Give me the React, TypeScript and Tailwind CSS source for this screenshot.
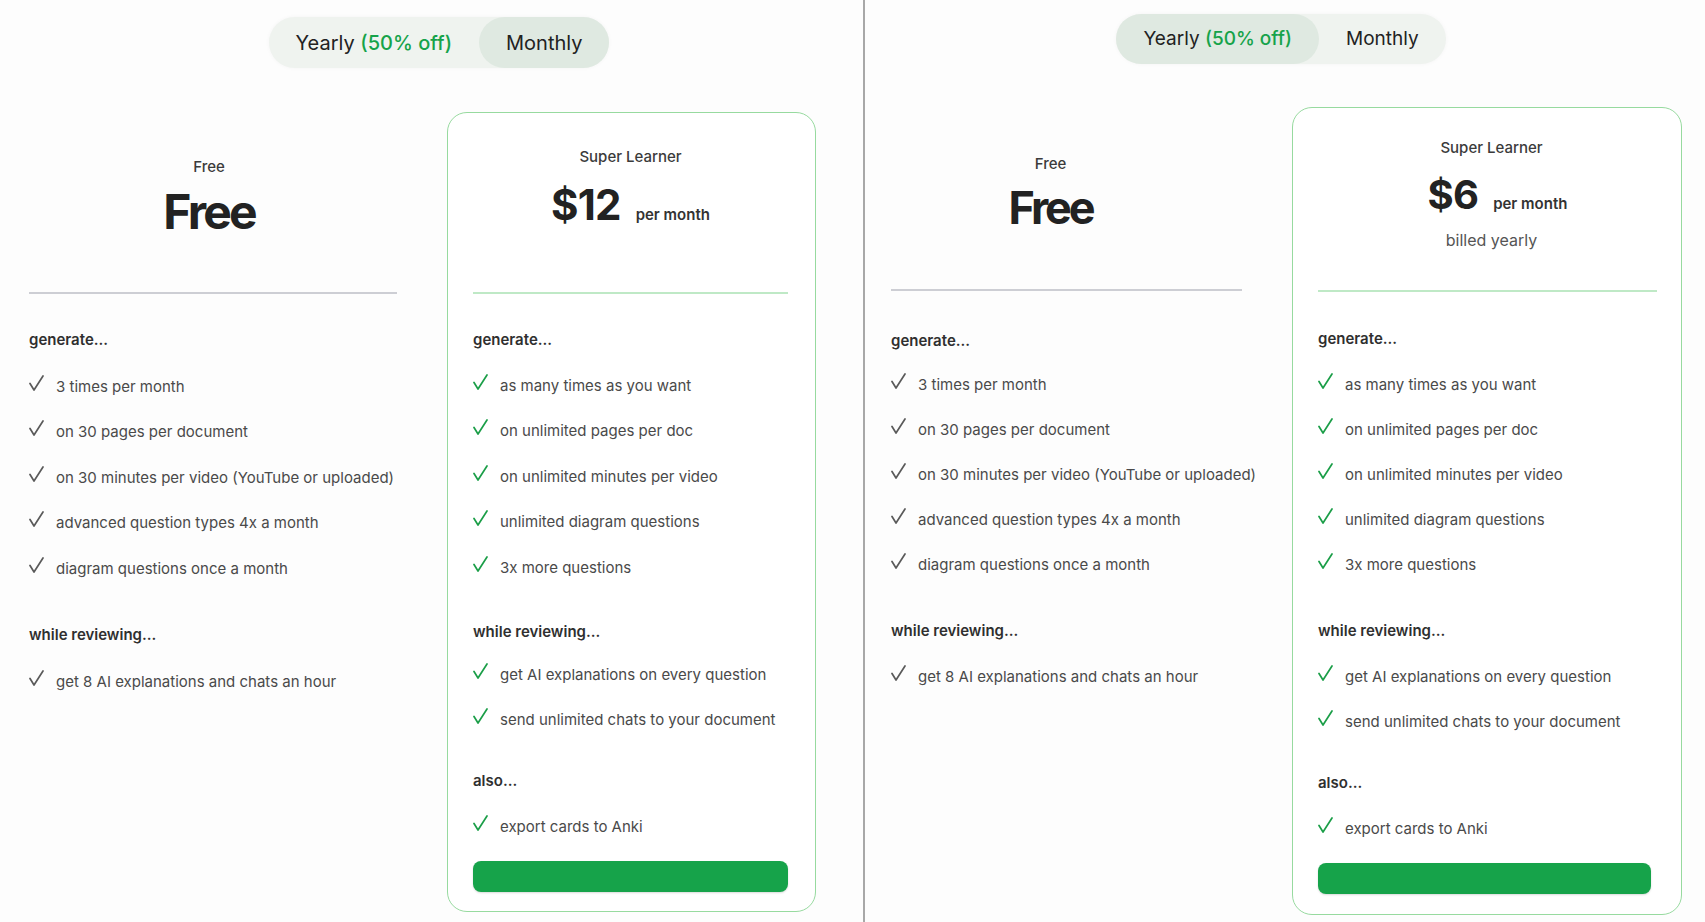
import type { ReactNode } from 'react';

const FREE_GENERATE = [
  '3 times per month',
  'on 30 pages per document',
  'on 30 minutes per video (YouTube or uploaded)',
  'advanced question types 4x a month',
  'diagram questions once a month',
];
const FREE_REVIEW = ['get 8 AI explanations and chats an hour'];
const PRO_GENERATE = [
  'as many times as you want',
  'on unlimited pages per doc',
  'on unlimited minutes per video',
  'unlimited diagram questions',
  '3x more questions',
];
const PRO_REVIEW = ['get AI explanations on every question', 'send unlimited chats to your document'];
const PRO_ALSO = ['export cards to Anki'];

type Layout = {
  panel: string;
  toggleRow: string;
  toggleH: string;
  toggleText: string;
  cards: string;
  freeCol: string;
  freeHead: string;
  freeBig: string;
  freeList: string;
  freeGap: string;
  freeFirst: string;
  freeReviewFirst: string;
  proCard: string;
  proHead: string;
  priceRow: string;
  price: string;
  proList: string;
  proGap: string;
  proReviewFirst: string;
  alsoShift: string;
  proBottom: string;
  rowGap: string;
};

const LEFT: Layout = {
  panel: 'w-[863px]',
  toggleRow: 'pt-[17px] pl-[15px]',
  toggleH: 'h-[51px]',
  toggleText: 'text-[20px]',
  cards: 'mt-[44px] pl-[29px] gap-[50px]',
  freeCol: 'w-[368px]',
  freeHead: 'h-[180px] pt-[45px] pr-[8px]',
  freeBig: 'text-[48px] mt-[11px] tracking-[-0.06em]',
  freeList: 'pt-[36px]',
  freeGap: 'gap-[46px]',
  freeFirst: 'mt-[27px]',
  freeReviewFirst: 'mt-[27px]',
  proCard: 'w-[369px] pl-[25px] pr-[27px]',
  proHead: 'h-[179px] pt-[34px]',
  priceRow: '',
  price: 'text-[42px]',
  proList: 'pt-[36px]',
  proGap: 'gap-[44px]',
  proReviewFirst: 'mt-[23px]',
  alsoShift: '-mt-[3px]',
  proBottom: 'mt-[24px] mb-[19px]',
  rowGap: 'gap-[25.5px]',
};

const RIGHT: Layout = {
  panel: 'flex-1',
  toggleRow: 'pt-[14px] pr-[8px]',
  toggleH: 'h-[50px]',
  toggleText: 'text-[19px]',
  cards: 'mt-[43px] pl-[26px] gap-[50px]',
  freeCol: 'w-[351px]',
  freeHead: 'h-[182px] pt-[47px] pr-[32px]',
  freeBig: 'text-[45px] mt-[11px] tracking-[-0.07em]',
  freeList: 'pt-[40px]',
  freeGap: 'gap-[46px]',
  freeFirst: 'mt-[24px]',
  freeReviewFirst: 'mt-[26px]',
  proCard: 'w-[390px] pl-[25px] pr-[24px]',
  proHead: 'h-[182px] pt-[30px] pl-[8px]',
  priceRow: 'ml-[12px]',
  price: 'text-[40px]',
  proList: 'pt-[37px]',
  proGap: 'gap-[46px]',
  proReviewFirst: 'mt-[26px]',
  alsoShift: '-mt-[5px]',
  proBottom: 'mt-[24px] mb-[20px] mr-[6px]',
  rowGap: 'gap-[25px]',
};

function Check({ green }: { green?: boolean }) {
  return (
    <svg width="15" height="16" viewBox="0 0 15 16" fill="none">
      <path
        d="M1 8.5 L5 15 L14 1"
        stroke={green ? '#1b9e48' : '#5a5a5a'}
        strokeWidth="1.7"
        strokeLinecap="round"
        strokeLinejoin="round"
      />
    </svg>
  );
}

function Group({
  title,
  items,
  green,
  first = 'mt-[26px]',
  gap,
  className = '',
}: {
  title: string;
  items: string[];
  green?: boolean;
  first?: string;
  gap: string;
  className?: string;
}) {
  return (
    <div className={`flex flex-col ${className}`}>
      <h3 className="text-[15px] leading-[20px] font-semibold text-[#2f2f2f]">{title}</h3>
      <ul className={`${first} flex flex-col ${gap}`}>
        {items.map((t) => (
          <li key={t} className="flex h-[20px] items-start text-[15px] leading-[20px] text-[#4a4a4a]">
            <span className="-mt-[2px] w-[27px] shrink-0">
              <Check green={green} />
            </span>
            <span className="whitespace-nowrap">{t}</span>
          </li>
        ))}
      </ul>
    </div>
  );
}

function Toggle({ yearly, h, text }: { yearly: boolean; h: string; text: string }) {
  return (
    <div className={`flex ${h} ${text} items-stretch rounded-full bg-[#eff3ef] text-[#222] shadow-[0_0_4px_rgba(0,0,0,0.04)]`}>
      <div className={`flex items-center rounded-full px-[27px] ${yearly ? 'bg-[#dfe9e1]' : ''}`}>
        Yearly&nbsp;<span className="font-medium text-[#16a34a]">(50% off)</span>
      </div>
      <div className={`flex items-center rounded-full px-[27px] ${yearly ? '' : 'bg-[#dfe9e1]'}`}>Monthly</div>
    </div>
  );
}

function Panel({ yearly, l }: { yearly: boolean; l: Layout }) {
  return (
    <div className={`${l.panel} flex flex-col`}>
      <div className={`flex justify-center ${l.toggleRow}`}>
        <Toggle yearly={yearly} h={l.toggleH} text={l.toggleText} />
      </div>
      <div className={`flex items-start ${l.cards}`}>
        {/* free column */}
        <div className={`${l.freeCol} flex flex-col`}>
          <div className={`${l.freeHead} flex flex-col items-center`}>
            <div className="text-[15px] leading-[20px] font-medium text-[#3b3b3b]">Free</div>
            <div className={`${l.freeBig} leading-none font-bold text-[#222]`}>Free</div>
          </div>
          <div className="h-[1.5px] bg-[#cdced4]" />
          <div className={`flex flex-col ${l.freeList} ${l.freeGap}`}>
            <Group title="generate..." items={FREE_GENERATE} first={l.freeFirst} gap={l.rowGap} />
            <Group title="while reviewing..." items={FREE_REVIEW} first={l.freeReviewFirst} gap={l.rowGap} />
          </div>
        </div>

        {/* super learner card */}
        <div className={`${l.proCard} flex flex-col rounded-[20px] border-[1.5px] border-[#97da9f] bg-white`}>
          <div className={`${l.proHead} flex flex-col items-center`}>
            <div className="text-[15px] leading-[20px] font-medium text-[#3b3b3b]">Super Learner</div>
            <div className={`mt-[17px] flex items-baseline gap-[15px] ${l.priceRow}`}>
              <span className={`${l.price} leading-none font-bold tracking-[-0.02em] text-[#222]`}>
                {yearly ? '$6' : '$12'}
              </span>
              <span className="text-[15px] font-semibold text-[#333]">per month</span>
            </div>
            {yearly && <div className="mt-[12px] text-[16px] leading-[24px] text-[#555]">billed yearly</div>}
          </div>
          <div className="h-[1.5px] bg-[#bfe9c6]" />
          <div className={`flex flex-col ${l.proList} ${l.proGap}`}>
            <Group title="generate..." items={PRO_GENERATE} green gap={l.rowGap} />
            <Group title="while reviewing..." items={PRO_REVIEW} green first={l.proReviewFirst} gap={l.rowGap} />
            <Group title="also..." items={PRO_ALSO} green gap={l.rowGap} className={l.alsoShift} />
          </div>
          <button className={`${l.proBottom} h-[31px] rounded-[8px] bg-[#16a34a] shadow-[0_1px_2px_rgba(0,0,0,0.15)]`} />
        </div>
      </div>
    </div>
  );
}

function Shell({ children }: { children: ReactNode }) {
  return (
    <div className="flex h-[922px] w-[1705px] overflow-hidden bg-[#fdfdfd] font-['Inter','Liberation_Sans',sans-serif]">
      {children}
    </div>
  );
}

export default function App() {
  return (
    <Shell>
      <Panel yearly={false} l={LEFT} />
      <div className="w-[2px] shrink-0 bg-[#a8a8a8]" />
      <Panel yearly l={RIGHT} />
    </Shell>
  );
}
